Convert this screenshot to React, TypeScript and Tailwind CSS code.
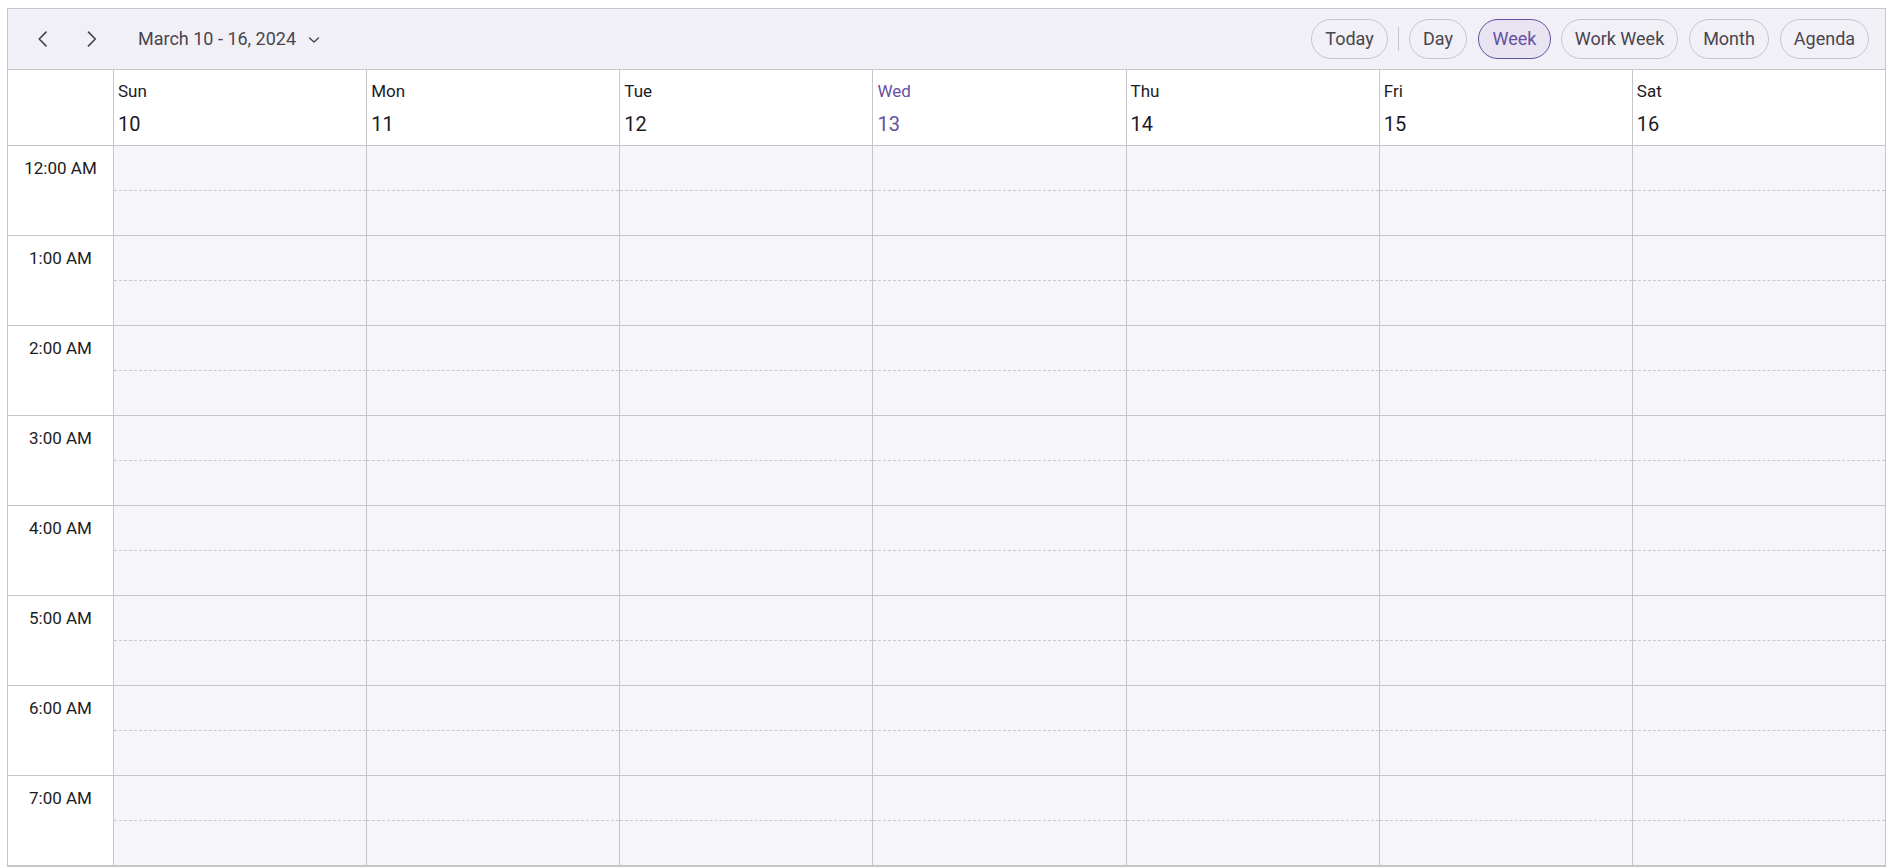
import React from "react";

const days = [
  { name: "Sun", date: "10" },
  { name: "Mon", date: "11" },
  { name: "Tue", date: "12" },
  { name: "Wed", date: "13", today: true },
  { name: "Thu", date: "14" },
  { name: "Fri", date: "15" },
  { name: "Sat", date: "16" },
];

const hours = [
  "12:00 AM",
  "1:00 AM",
  "2:00 AM",
  "3:00 AM",
  "4:00 AM",
  "5:00 AM",
  "6:00 AM",
  "7:00 AM",
];

function ChevronLeft() {
  return (
    <svg width="20" height="20" viewBox="0 0 20 20" fill="none">
      <path d="M14 3.2 L7.2 10 L14 16.8" stroke="#49454f" strokeWidth="1.7" strokeLinecap="round" strokeLinejoin="round" />
    </svg>
  );
}

function ChevronRight() {
  return (
    <svg width="20" height="20" viewBox="0 0 20 20" fill="none">
      <path d="M6.5 3.2 L13.3 10 L6.5 16.8" stroke="#49454f" strokeWidth="1.7" strokeLinecap="round" strokeLinejoin="round" />
    </svg>
  );
}

function ChevronDown() {
  return (
    <svg width="12" height="12" viewBox="0 0 12 12" fill="none">
      <path d="M1.5 4 L6 8 L10.5 4" stroke="#49454f" strokeWidth="1.4" strokeLinecap="round" strokeLinejoin="round" />
    </svg>
  );
}

const btn =
  "h-[40px] pb-[2px] rounded-full border flex items-center justify-center";

export default function App() {
  return (
    <div className="w-[1892px] h-[867px] overflow-hidden bg-white font-['Roboto','Liberation_Sans',sans-serif]">
      <div className="ml-[7px] mr-[6px] mt-[8px] border border-[#c6c5ca]">
        {/* Toolbar */}
        <div className="h-[61px] bg-[#f1f0f6] border-b border-[#c6c5ca] flex items-center pl-[14px] pr-[16px]">
          <button className="w-[40px] h-[40px] rounded-full flex items-center justify-center">
            <ChevronLeft />
          </button>
          <button className="ml-[10px] w-[40px] h-[40px] rounded-full flex items-center justify-center">
            <ChevronRight />
          </button>
          <div className="ml-[26px] h-[40px] pb-[2px] flex items-center text-[18px] text-[#49454f]">
            <span>March 10 - 16, 2024</span>
            <span className="ml-[12px] mt-[3px]">
              <ChevronDown />
            </span>
          </div>
          <div className="flex-1" />
          <div className="flex items-center text-[18px] text-[#49454f]">
            <button className={`${btn} w-[77px] border-[#cac4d0]`}>Today</button>
            <div className="mx-[10px] w-px h-[24px] bg-[#cac4d0]" />
            <button className={`${btn} w-[58px] border-[#cac4d0]`}>Day</button>
            <button className={`${btn} ml-[11px] w-[73px] border-[#6750a4] bg-[#e8e4f2] text-[#6750a4]`}>Week</button>
            <button className={`${btn} ml-[10px] w-[117px] border-[#cac4d0]`}>Work Week</button>
            <button className={`${btn} ml-[11px] w-[80px] border-[#cac4d0]`}>Month</button>
            <button className={`${btn} ml-[11px] w-[89px] border-[#cac4d0]`}>Agenda</button>
          </div>
        </div>

        {/* Header */}
        <div className="grid grid-cols-[105px_repeat(7,minmax(0,1fr))] h-[76px] border-b border-[#c6c5ca] bg-white">
          <div />
          {days.map((d) => (
            <div
              key={d.name}
              className={`border-l border-[#c6c5ca] pl-[4px] pt-[9px] ${d.today ? "text-[#6750a4]" : "text-[#1c1b1f]"}`}
            >
              <div className="text-[17px] leading-[24px]">{d.name}</div>
              <div className="text-[20px] leading-[26px] mt-[8px]">{d.date}</div>
            </div>
          ))}
        </div>

        {/* Body */}
        <div className="grid grid-cols-[105px_repeat(7,minmax(0,1fr))]">
          <div className="bg-white">
            {hours.map((h) => (
              <div key={h} className="h-[90px] border-b border-[#c6c5ca] flex justify-center pt-[10px]">
                <span className="text-[17px] leading-[24px] text-[#1c1b1f]">{h}</span>
              </div>
            ))}
          </div>
          {days.map((d) => (
            <div key={d.name} className="border-l border-[#c6c5ca] bg-[#f6f6fa]">
              {hours.map((h) => (
                <div key={h}>
                  <div className="h-[45px] border-b border-dashed border-[#c9c8cd]" />
                  <div className="h-[45px] border-b border-[#c6c5ca]" />
                </div>
              ))}
            </div>
          ))}
        </div>
      </div>
    </div>
  );
}
